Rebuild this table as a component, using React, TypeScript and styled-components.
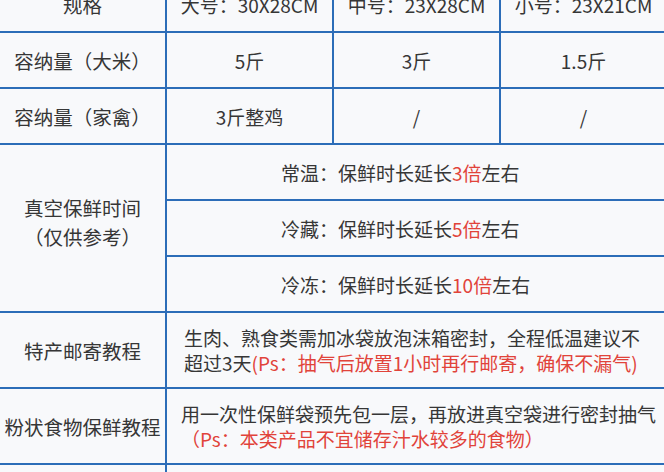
import React from 'react';
import styled, { createGlobalStyle } from 'styled-components';

const GlobalStyle = createGlobalStyle`
  html, body {
    margin: 0;
    padding: 0;
    background: #f8f9fb;
  }
  body {
    font-family: "Noto Sans CJK SC", "Noto Sans", sans-serif;
  }
`;

const Page = styled.div`
  width: 664px;
  height: 472px;
  overflow: hidden;
  background: #f8f9fb;
`;

const SpecTable = styled.table`
  border-collapse: collapse;
  table-layout: fixed;
  width: 670px;
  margin: -25px 0 0 -2px;
  color: #363636;
`;

const Row = styled.tr<{ $tall?: boolean }>`
  & > td {
    height: ${(p) => (p.$tall ? 74 : 54)}px;
  }
`;

const LabelCell = styled.td<{ $lift?: number }>`
  border: 2px solid #2c6db8;
  padding: 0 0 ${(p) => p.$lift ?? 0}px;
  text-align: center;
  vertical-align: middle;
  font-size: 19.5px;
  line-height: 29px;
  white-space: nowrap;
`;

const ValueCell = styled.td`
  border: 2px solid #2c6db8;
  padding: 0;
  text-align: center;
  vertical-align: middle;
  font-size: 19px;
  white-space: nowrap;
`;

const NoteCell = styled.td<{ $indent: number }>`
  border: 2px solid #2c6db8;
  padding: 0 0 0 ${(p) => p.$indent}px;
  text-align: left;
  vertical-align: middle;
  font-size: 19px;
  line-height: 25px;
  white-space: nowrap;
`;

const Red = styled.span`
  color: #e1433a;
`;

const storage = [
  { mode: '常温', times: '3' },
  { mode: '冷藏', times: '5' },
  { mode: '冷冻', times: '10' },
];

export default function App() {
  return (
    <Page>
      <GlobalStyle />
      <SpecTable>
        <tbody>
          <Row>
            <LabelCell>规格</LabelCell>
            <ValueCell>大号：30X28CM</ValueCell>
            <ValueCell>中号：23X28CM</ValueCell>
            <ValueCell>小号：23X21CM</ValueCell>
          </Row>
          <Row>
            <LabelCell>容纳量（大米）</LabelCell>
            <ValueCell>5斤</ValueCell>
            <ValueCell>3斤</ValueCell>
            <ValueCell>1.5斤</ValueCell>
          </Row>
          <Row>
            <LabelCell>容纳量（家禽）</LabelCell>
            <ValueCell>3斤整鸡</ValueCell>
            <ValueCell>/</ValueCell>
            <ValueCell>/</ValueCell>
          </Row>
          {storage.map((s, i) => (
            <Row key={s.mode}>
              {i === 0 && (
                <LabelCell rowSpan={3} $lift={12}>
                  真空保鲜时间
                  <br />
                  （仅供参考）
                </LabelCell>
              )}
              <NoteCell colSpan={3} $indent={114}>
                {s.mode}：保鲜时长延长<Red>{s.times}倍</Red>左右
              </NoteCell>
            </Row>
          ))}
          <Row $tall>
            <LabelCell>特产邮寄教程</LabelCell>
            <NoteCell colSpan={3} $indent={17}>
              生肉、熟食类需加冰袋放泡沫箱密封，全程低温建议不
              <br />
              超过3天<Red>(Ps：抽气后放置1小时再行邮寄，确保不漏气)</Red>
            </NoteCell>
          </Row>
          <Row $tall>
            <LabelCell>粉状食物保鲜教程</LabelCell>
            <NoteCell colSpan={3} $indent={14}>
              用一次性保鲜袋预先包一层，再放进真空袋进行密封抽气
              <br />
              <Red>（Ps：本类产品不宜储存汁水较多的食物）</Red>
            </NoteCell>
          </Row>
          <Row $tall>
            <LabelCell>&nbsp;</LabelCell>
            <NoteCell colSpan={3} $indent={14}>&nbsp;</NoteCell>
          </Row>
        </tbody>
      </SpecTable>
    </Page>
  );
}
